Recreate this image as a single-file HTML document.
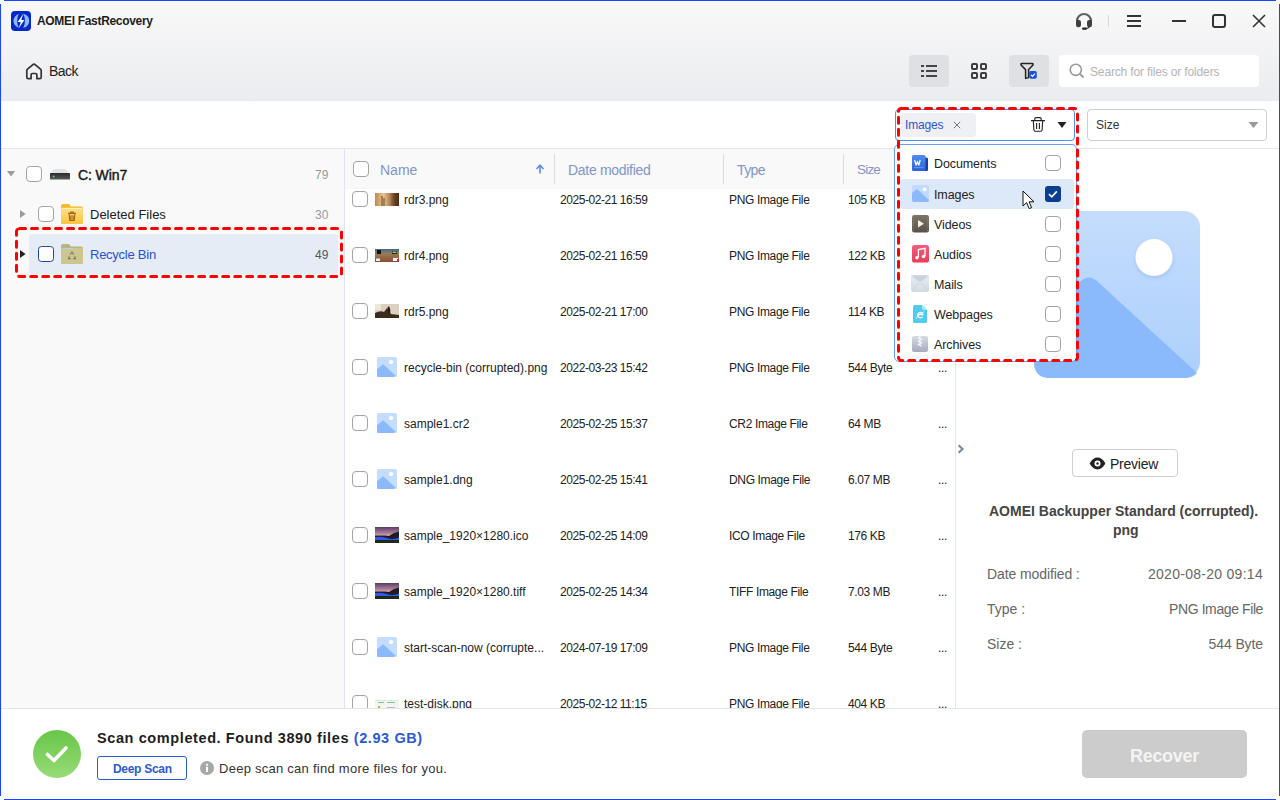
<!DOCTYPE html>
<html><head><meta charset="utf-8">
<style>
*{box-sizing:border-box;margin:0;padding:0}
html,body{width:1280px;height:800px;overflow:hidden;background:#fff}
body{position:relative;font-family:"Liberation Sans",sans-serif;color:#333}
.a{position:absolute}
.t{position:absolute;white-space:nowrap;line-height:1}
.bl{position:absolute;background:#1a44ff}
.cb{position:absolute;width:16px;height:16px;border:1px solid #a4a4a4;border-radius:4px;background:#fff}
</style></head><body>
<!-- header -->
<div class="a" style="left:0;top:0;width:1280px;height:101px;background:linear-gradient(#f9f9f9,#ebecef)"></div>
<!-- filter row -->
<div class="a" style="left:0;top:101px;width:1280px;height:47px;background:#fff"></div>
<div class="a" style="left:0;top:148px;width:1280px;height:1px;background:#e3e6f0"></div>
<!-- left panel -->
<div class="a" style="left:0;top:149px;width:344px;height:559px;background:#f9f9f9"></div>
<div class="a" style="left:344px;top:149px;width:1px;height:559px;background:#e2e3f2"></div>
<!-- table header -->
<div class="a" style="left:345px;top:149px;width:610px;height:40px;background:#f9f9fa"></div>
<!-- preview divider -->
<div class="a" style="left:955px;top:149px;width:1px;height:559px;background:#e6e6e6"></div>
<!-- bottom -->
<div class="a" style="left:0;top:708px;width:1280px;height:1px;background:#e6e6e6"></div>

<!-- title bar -->
<svg class="a" style="left:11px;top:11px" width="20" height="20" viewBox="0 0 20 20">
<rect x="0" y="0" width="20" height="20" rx="4" fill="#0428c8"/>
<path d="M8.4 3A7 7 0 0 0 9 16.9A2.6 7 0 0 1 8.4 3Z" fill="#8cb8ff"/>
<path d="M11.6 2.8A7 7 0 0 1 11 16.8A2.6 7 0 0 0 11.6 2.8Z" fill="#8cb8ff"/>
<path d="M12.4 2.4L6.7 11H9.8L7.5 17.6L13.4 9H10.3Z" fill="#fff"/>
</svg>
<div class="t" style="left:37px;top:15px;font-size:12px;font-weight:700;color:#1e1e1e;letter-spacing:-0.32px">AOMEI FastRecovery</div>
<!-- headset -->
<svg class="a" style="left:1075px;top:12px" width="18" height="18" viewBox="0 0 18 18">
<defs><linearGradient id="hg" x1="0" y1="0" x2="0" y2="1"><stop offset="0" stop-color="#666"/><stop offset="1" stop-color="#333"/></linearGradient></defs>
<path d="M2 12V9A7 7 0 0 1 16 9V12" stroke="url(#hg)" stroke-width="2" fill="none"/>
<rect x="1" y="8" width="5" height="7.2" rx="2.2" fill="#3f3f3f"/>
<rect x="12" y="8" width="5" height="7.2" rx="2.2" fill="#3f3f3f"/>
<path d="M14.6 14.6Q13.6 16.5 10.5 16.6" stroke="#333" stroke-width="1.1" fill="none"/>
<rect x="7" y="15.4" width="5" height="2.4" rx="1.2" fill="#222"/>
</svg>
<div class="a" style="left:1108px;top:15px;width:1px;height:12px;background:#d8d8d8"></div>
<div class="a" style="left:1127px;top:15px;width:14px;height:2px;background:#333"></div>
<div class="a" style="left:1127px;top:20px;width:14px;height:2px;background:#333"></div>
<div class="a" style="left:1127px;top:25px;width:14px;height:2px;background:#333"></div>
<div class="a" style="left:1172px;top:20px;width:14px;height:2px;background:#333"></div>
<div class="a" style="left:1212px;top:14px;width:14px;height:14px;border:2px solid #333;border-radius:3px"></div>
<svg class="a" style="left:1252px;top:14px" width="14" height="14" viewBox="0 0 14 14">
<path d="M1 1L13 13M13 1L1 13" stroke="#333" stroke-width="1.6"/>
</svg>
<!-- back -->
<svg class="a" style="left:25px;top:62px" width="18" height="18" viewBox="0 0 18 18">
<path d="M1.8 8.6Q1.8 7.8 2.5 7.2L7.6 2.8Q9 1.6 10.4 2.8L15.5 7.2Q16.2 7.8 16.2 8.6V15.3Q16.2 16.7 14.8 16.7H11.9V12.8Q11.9 11.5 10.6 11.5H7.4Q6.1 11.5 6.1 12.8V16.7H3.2Q1.8 16.7 1.8 15.3Z" stroke="#333" stroke-width="1.7" fill="none" stroke-linejoin="round"/>
</svg>
<div class="t" style="left:49px;top:64px;font-size:14px;color:#222;letter-spacing:-0.5px">Back</div>
<!-- toolbar -->
<div class="a" style="left:909px;top:55px;width:40px;height:32px;border-radius:4px;background:#dfe0e3"></div>
<div class="a" style="left:921px;top:65px;width:3px;height:2px;background:#444"></div>
<div class="a" style="left:921px;top:70px;width:3px;height:2px;background:#444"></div>
<div class="a" style="left:921px;top:75px;width:3px;height:2px;background:#444"></div>
<div class="a" style="left:926px;top:65px;width:11px;height:2px;background:#444"></div>
<div class="a" style="left:926px;top:70px;width:11px;height:2px;background:#444"></div>
<div class="a" style="left:926px;top:75px;width:11px;height:2px;background:#444"></div>
<div class="a" style="left:971px;top:63px;width:7px;height:7px;border:2px solid #3d3d3d;border-radius:2px"></div>
<div class="a" style="left:980px;top:63px;width:7px;height:7px;border:2px solid #3d3d3d;border-radius:2px"></div>
<div class="a" style="left:971px;top:72px;width:7px;height:7px;border:2px solid #3d3d3d;border-radius:2px"></div>
<div class="a" style="left:980px;top:72px;width:7px;height:7px;border:2px solid #3d3d3d;border-radius:2px"></div>
<div class="a" style="left:1009px;top:55px;width:40px;height:32px;border-radius:4px;background:#dfe0e3"></div>
<svg class="a" style="left:1020px;top:62px" width="20" height="18" viewBox="0 0 20 18">
<path d="M1.6 1.4H12.4Q13 1.4 13 2V3L8.6 7.6V15.6L5.6 16.4V7.6L1 3V2Q1 1.4 1.6 1.4Z" stroke="#222" stroke-width="1.5" fill="none" stroke-linejoin="round"/>
<rect x="9.2" y="9" width="7.6" height="7.8" rx="1.8" fill="#1a50d4"/>
<path d="M10.9 12.9L12.5 14.3L15 11.6" stroke="#fff" stroke-width="1.2" fill="none"/>
</svg>
<div class="a" style="left:1059px;top:55px;width:200px;height:32px;border-radius:4px;background:#fff"></div>
<svg class="a" style="left:1069px;top:63px" width="16" height="16" viewBox="0 0 16 16">
<circle cx="6.8" cy="6.8" r="5.6" stroke="#999" stroke-width="1.6" fill="none"/>
<path d="M10.8 10.8L14.5 14.5" stroke="#999" stroke-width="1.8"/>
</svg>
<div class="t" style="left:1090px;top:66px;font-size:12px;color:#b4b4b4;letter-spacing:-0.15px">Search for files or folders</div>

<!-- filter row -->
<div class="a" style="left:895px;top:109px;width:180px;height:32px;border:1px solid #4d8ff0;border-radius:4px;background:#fff"></div>
<div class="a" style="left:901px;top:113px;width:75px;height:24px;border-radius:4px;background:#eff0f3"></div>
<div class="t" style="left:905px;top:119px;font-size:12px;color:#2f55cc;letter-spacing:-0.18px">Images</div>
<svg class="a" style="left:952px;top:120px" width="10" height="10" viewBox="0 0 10 10"><path d="M1.8 1.8L8.2 8.2M8.2 1.8L1.8 8.2" stroke="#777" stroke-width="1"/></svg>
<svg class="a" style="left:1030px;top:116px" width="16" height="16" viewBox="0 0 16 16">
<path d="M1 4.6H15M4.8 4.4V2.8Q4.8 1.6 6 1.6H10Q11.2 1.6 11.2 2.8V4.4M3.3 4.8L3.9 14Q4 15.3 5.3 15.3H10.7Q12 15.3 12.1 14L12.7 4.8M6.6 7V13M9.4 7V13" stroke="#222" stroke-width="1.1" fill="none"/>
</svg>
<svg class="a" style="left:1057px;top:121px" width="10" height="8" viewBox="0 0 10 8"><path d="M0.5 1H9.5L5 7Z" fill="#222"/></svg>
<div class="a" style="left:1087px;top:109px;width:180px;height:32px;border:1px solid #cfcfcf;border-radius:4px;background:#fff"></div>
<div class="t" style="left:1096px;top:119px;font-size:12px;color:#333">Size</div>
<svg class="a" style="left:1248px;top:121px" width="11" height="8" viewBox="0 0 11 8"><path d="M0.5 1H10.5L5.5 7Z" fill="#999"/></svg>

<!-- table -->
<div class="cb" style="left:353px;top:161px"></div>
<div class="t" style="left:380px;top:163px;font-size:14px;color:#8195c7">Name</div>
<svg class="a" style="left:535px;top:164px" width="10" height="10" viewBox="0 0 10 10"><path d="M5 9.5V1.5M1.5 5L5 1.2L8.5 5" stroke="#5b8fe2" stroke-width="1.6" fill="none"/></svg>
<div class="a" style="left:554px;top:154px;width:1px;height:30px;background:#dcdcdc"></div>
<div class="t" style="left:568px;top:163px;font-size:14px;color:#8195c7;letter-spacing:-0.3px">Date modified</div>
<div class="a" style="left:723px;top:154px;width:1px;height:30px;background:#dcdcdc"></div>
<div class="t" style="left:737px;top:163px;font-size:14px;color:#8195c7;letter-spacing:-0.6px">Type</div>
<div class="a" style="left:843px;top:154px;width:1px;height:30px;background:#dcdcdc"></div>
<div class="t" style="left:857px;top:163px;font-size:13.5px;color:#8195c7;letter-spacing:-0.8px">Size</div>
<div class="a" style="left:345px;top:189px;width:610px;height:519px;overflow:hidden">
<div style="position:absolute;left:-345px;top:-189px;width:1280px;height:800px;font-size:12px;color:#222">
<div class="cb" style="left:352px;top:191px"></div>
<svg class="a" style="left:375px;top:193px" width="24" height="13" viewBox="0 0 24 13"><defs><linearGradient id="r3" x1="0" y1="0" x2="1" y2="0"><stop offset="0" stop-color="#c08a50"/><stop offset="0.35" stop-color="#e6c690"/><stop offset="0.6" stop-color="#b88858"/><stop offset="0.8" stop-color="#6a4424"/><stop offset="1" stop-color="#4a2c16"/></linearGradient></defs><rect width="24" height="13" fill="url(#r3)"/><path d="M7 3V13M9 5V13" stroke="#7a5230" stroke-width="1.2"/></svg>
<div class="t" style="left:404px;top:194px">rdr3.png</div>
<div class="t" style="left:560px;top:194px;letter-spacing:-0.45px">2025-02-21 16:59</div>
<div class="t" style="left:729px;top:194px;letter-spacing:-0.35px">PNG Image File</div>
<div class="t" style="left:848px;top:194px;letter-spacing:-0.38px">105 KB</div>
<div class="t" style="left:938px;top:194px;letter-spacing:-0.3px">...</div>
<div class="cb" style="left:352px;top:247px"></div>
<svg class="a" style="left:375px;top:249px" width="24" height="13" viewBox="0 0 24 13"><defs><linearGradient id="r4" x1="0" y1="0" x2="0" y2="1"><stop offset="0" stop-color="#3b6a96"/><stop offset="0.35" stop-color="#9a7a5a"/><stop offset="1" stop-color="#8a5030"/></linearGradient></defs><rect width="24" height="13" fill="url(#r4)"/><rect x="2" y="1" width="4" height="4" fill="#111"/><rect x="17" y="2" width="5" height="3" fill="#222"/><rect x="17.5" y="2.5" width="4" height="1.5" fill="#9c3"/><rect x="1" y="9.5" width="4" height="2.5" fill="#eee"/><rect x="18" y="9" width="5" height="3" fill="#fff"/><rect x="22" y="10" width="2" height="2" fill="#d22"/></svg>
<div class="t" style="left:404px;top:250px">rdr4.png</div>
<div class="t" style="left:560px;top:250px;letter-spacing:-0.45px">2025-02-21 16:59</div>
<div class="t" style="left:729px;top:250px;letter-spacing:-0.35px">PNG Image File</div>
<div class="t" style="left:848px;top:250px;letter-spacing:-0.38px">122 KB</div>
<div class="t" style="left:938px;top:250px;letter-spacing:-0.3px">...</div>
<div class="cb" style="left:352px;top:303px"></div>
<svg class="a" style="left:375px;top:304px" width="24" height="14" viewBox="0 0 24 14"><rect width="24" height="14" fill="#ddd0be"/><path d="M0 9Q6 6 9 8L12 4Q14 6 16 10L24 11V14H0Z" fill="#3c2c1e"/><path d="M13 3Q15 5 14 9" stroke="#2a1e14" stroke-width="2"/><rect x="0" y="0" width="6" height="6" fill="#efe6da"/></svg>
<div class="t" style="left:404px;top:306px">rdr5.png</div>
<div class="t" style="left:560px;top:306px;letter-spacing:-0.45px">2025-02-21 17:00</div>
<div class="t" style="left:729px;top:306px;letter-spacing:-0.35px">PNG Image File</div>
<div class="t" style="left:848px;top:306px;letter-spacing:-0.38px">114 KB</div>
<div class="t" style="left:938px;top:306px;letter-spacing:-0.3px">...</div>
<div class="cb" style="left:352px;top:359px"></div>
<svg class="a" style="left:377px;top:357px" width="20" height="20" viewBox="0 0 20 20"><rect width="20" height="20" rx="1.5" fill="#c4dcfd"/><path d="M0 12.5L5.3 7.8Q6 7.2 6.7 7.8L18.5 18.6Q17.8 20 16.5 20H1.5Q0 20 0 18.5Z" fill="#8bb9fb"/><circle cx="14" cy="5.2" r="2.1" fill="#fff"/></svg>
<div class="t" style="left:404px;top:362px">recycle-bin (corrupted).png</div>
<div class="t" style="left:560px;top:362px;letter-spacing:-0.45px">2022-03-23 15:42</div>
<div class="t" style="left:729px;top:362px;letter-spacing:-0.35px">PNG Image File</div>
<div class="t" style="left:848px;top:362px;letter-spacing:-0.38px">544 Byte</div>
<div class="t" style="left:938px;top:362px;letter-spacing:-0.3px">...</div>
<div class="cb" style="left:352px;top:415px"></div>
<svg class="a" style="left:377px;top:413px" width="20" height="20" viewBox="0 0 20 20"><rect width="20" height="20" rx="1.5" fill="#c4dcfd"/><path d="M0 12.5L5.3 7.8Q6 7.2 6.7 7.8L18.5 18.6Q17.8 20 16.5 20H1.5Q0 20 0 18.5Z" fill="#8bb9fb"/><circle cx="14" cy="5.2" r="2.1" fill="#fff"/></svg>
<div class="t" style="left:404px;top:418px">sample1.cr2</div>
<div class="t" style="left:560px;top:418px;letter-spacing:-0.45px">2025-02-25 15:37</div>
<div class="t" style="left:729px;top:418px;letter-spacing:-0.35px">CR2 Image File</div>
<div class="t" style="left:848px;top:418px;letter-spacing:-0.38px">64 MB</div>
<div class="t" style="left:938px;top:418px;letter-spacing:-0.3px">...</div>
<div class="cb" style="left:352px;top:471px"></div>
<svg class="a" style="left:377px;top:469px" width="20" height="20" viewBox="0 0 20 20"><rect width="20" height="20" rx="1.5" fill="#c4dcfd"/><path d="M0 12.5L5.3 7.8Q6 7.2 6.7 7.8L18.5 18.6Q17.8 20 16.5 20H1.5Q0 20 0 18.5Z" fill="#8bb9fb"/><circle cx="14" cy="5.2" r="2.1" fill="#fff"/></svg>
<div class="t" style="left:404px;top:474px">sample1.dng</div>
<div class="t" style="left:560px;top:474px;letter-spacing:-0.45px">2025-02-25 15:41</div>
<div class="t" style="left:729px;top:474px;letter-spacing:-0.35px">DNG Image File</div>
<div class="t" style="left:848px;top:474px;letter-spacing:-0.38px">6.07 MB</div>
<div class="t" style="left:938px;top:474px;letter-spacing:-0.3px">...</div>
<div class="cb" style="left:352px;top:527px"></div>
<svg class="a" style="left:375px;top:527px" width="24" height="16" viewBox="0 0 24 16"><defs><linearGradient id="nt" x1="0" y1="0" x2="0" y2="1"><stop offset="0" stop-color="#5a3c60"/><stop offset="0.45" stop-color="#b88aa8"/><stop offset="0.55" stop-color="#e8b890"/></linearGradient></defs><rect width="24" height="16" fill="url(#nt)"/><path d="M0 8.5H10L14 9L19 6L24 4.5V16H0Z" fill="#1c1c22"/><path d="M0 10Q6 9 12 11T24 10.5V13.5Q16 12.5 10 14T0 13Z" fill="#2d5af0"/><rect x="0" y="13" width="24" height="3" fill="#202a18"/></svg>
<div class="t" style="left:404px;top:530px">sample_1920×1280.ico</div>
<div class="t" style="left:560px;top:530px;letter-spacing:-0.45px">2025-02-25 14:09</div>
<div class="t" style="left:729px;top:530px;letter-spacing:-0.35px">ICO Image File</div>
<div class="t" style="left:848px;top:530px;letter-spacing:-0.38px">176 KB</div>
<div class="t" style="left:938px;top:530px;letter-spacing:-0.3px">...</div>
<div class="cb" style="left:352px;top:583px"></div>
<svg class="a" style="left:375px;top:583px" width="24" height="16" viewBox="0 0 24 16"><defs><linearGradient id="nt" x1="0" y1="0" x2="0" y2="1"><stop offset="0" stop-color="#5a3c60"/><stop offset="0.45" stop-color="#b88aa8"/><stop offset="0.55" stop-color="#e8b890"/></linearGradient></defs><rect width="24" height="16" fill="url(#nt)"/><path d="M0 8.5H10L14 9L19 6L24 4.5V16H0Z" fill="#1c1c22"/><path d="M0 10Q6 9 12 11T24 10.5V13.5Q16 12.5 10 14T0 13Z" fill="#2d5af0"/><rect x="0" y="13" width="24" height="3" fill="#202a18"/></svg>
<div class="t" style="left:404px;top:586px">sample_1920×1280.tiff</div>
<div class="t" style="left:560px;top:586px;letter-spacing:-0.45px">2025-02-25 14:34</div>
<div class="t" style="left:729px;top:586px;letter-spacing:-0.35px">TIFF Image File</div>
<div class="t" style="left:848px;top:586px;letter-spacing:-0.38px">7.03 MB</div>
<div class="t" style="left:938px;top:586px;letter-spacing:-0.3px">...</div>
<div class="cb" style="left:352px;top:639px"></div>
<svg class="a" style="left:377px;top:637px" width="20" height="20" viewBox="0 0 20 20"><rect width="20" height="20" rx="1.5" fill="#c4dcfd"/><path d="M0 12.5L5.3 7.8Q6 7.2 6.7 7.8L18.5 18.6Q17.8 20 16.5 20H1.5Q0 20 0 18.5Z" fill="#8bb9fb"/><circle cx="14" cy="5.2" r="2.1" fill="#fff"/></svg>
<div class="t" style="left:404px;top:642px">start-scan-now (corrupte...</div>
<div class="t" style="left:560px;top:642px;letter-spacing:-0.45px">2024-07-19 17:09</div>
<div class="t" style="left:729px;top:642px;letter-spacing:-0.35px">PNG Image File</div>
<div class="t" style="left:848px;top:642px;letter-spacing:-0.38px">544 Byte</div>
<div class="t" style="left:938px;top:642px;letter-spacing:-0.3px">...</div>
<div class="cb" style="left:352px;top:695px"></div>
<svg class="a" style="left:375px;top:700px" width="24" height="14" viewBox="0 0 24 14"><rect width="24" height="14" fill="#f3f5f3"/><rect x="0" y="0" width="24" height="1" fill="#dde6ee"/><rect x="3" y="2" width="6" height="1" fill="#7ec87e"/><rect x="12" y="2" width="8" height="1" fill="#7ec87e"/><rect x="3" y="6" width="2" height="2" fill="#c9a84a"/><rect x="12" y="7" width="8" height="1" fill="#bbb"/></svg>
<div class="t" style="left:404px;top:698px">test-disk.png</div>
<div class="t" style="left:560px;top:698px;letter-spacing:-0.45px">2025-02-12 11:15</div>
<div class="t" style="left:729px;top:698px;letter-spacing:-0.35px">PNG Image File</div>
<div class="t" style="left:848px;top:698px;letter-spacing:-0.38px">404 KB</div>
<div class="t" style="left:938px;top:698px;letter-spacing:-0.3px">...</div>
</div></div>

<!-- preview panel -->
<svg class="a" style="left:1034px;top:211px" width="166" height="167" viewBox="0 0 166 167">
<defs><linearGradient id="pg1" x1="0" y1="0" x2="0" y2="1"><stop offset="0" stop-color="#c5ddfd"/><stop offset="1" stop-color="#acd0fc"/></linearGradient>
<filter id="sh" x="-30%" y="-30%" width="160%" height="160%"><feDropShadow dx="0" dy="2" stdDeviation="2" flood-color="#6f9de0" flood-opacity="0.35"/></filter></defs>
<rect width="166" height="167" rx="16" fill="url(#pg1)"/>
<path d="M0 118L46 71Q55 62 64 71L163 162Q159 167 150 167H16Q0 167 0 151Z" fill="#8ab9fc"/>
<circle cx="120" cy="46.5" r="18.5" fill="#fff" filter="url(#sh)"/>
</svg>
<svg class="a" style="left:957px;top:444px" width="8" height="10" viewBox="0 0 8 10"><path d="M1.6 1.2L5.6 5L1.6 8.8" stroke="#7888a0" stroke-width="2" fill="none"/></svg>
<div class="a" style="left:1072px;top:449px;width:106px;height:28px;border:1px solid #cfcfcf;border-radius:4px;background:#fff"></div>
<svg class="a" style="left:1089px;top:457px" width="17" height="13" viewBox="0 0 17 13">
<path d="M0.6 6.5Q4 0.6 8.5 0.6Q13 0.6 16.4 6.5Q13 12.4 8.5 12.4Q4 12.4 0.6 6.5Z" fill="#222"/>
<circle cx="8.5" cy="6.5" r="3" fill="#fff"/><circle cx="8.5" cy="6.5" r="1.2" fill="#222"/>
</svg>
<div class="t" style="left:1110px;top:457px;font-size:14px;color:#222;letter-spacing:-0.23px">Preview</div>
<div class="t" style="left:989px;top:504px;font-size:14px;font-weight:700;color:#444;letter-spacing:0px">AOMEI Backupper Standard (corrupted).</div>
<div class="t" style="left:1113px;top:523px;font-size:14px;font-weight:700;color:#444">png</div>
<div class="t" style="left:987px;top:567px;font-size:14px;color:#666;letter-spacing:-0.1px">Date modified :</div>
<div class="t" style="left:987px;top:602px;font-size:14px;color:#666">Type :</div>
<div class="t" style="left:987px;top:637px;font-size:14px;color:#666">Size :</div>
<div class="t" style="right:17px;top:567px;font-size:14px;color:#666;letter-spacing:0.28px">2020-08-20 09:14</div>
<div class="t" style="right:17px;top:602px;font-size:14px;color:#666;letter-spacing:-0.4px">PNG Image File</div>
<div class="t" style="right:17px;top:637px;font-size:14px;color:#666;letter-spacing:-0.1px">544 Byte</div>

<!-- bottom bar -->
<svg class="a" style="left:33px;top:730px" width="48" height="48" viewBox="0 0 48 48">
<defs><linearGradient id="gg" x1="0" y1="0" x2="0" y2="1"><stop offset="0" stop-color="#68c648"/><stop offset="1" stop-color="#97dc76"/></linearGradient></defs>
<circle cx="24" cy="24" r="24" fill="url(#gg)"/>
<path d="M14.5 24.5L21 30.5L33 18" stroke="#fff" stroke-width="3.6" fill="none" stroke-linecap="round" stroke-linejoin="round"/>
</svg>
<div class="t" style="left:97px;top:731px;font-size:14.5px;font-weight:700;color:#1e1e1e;letter-spacing:0.6px">Scan completed. Found 3890 files <span style="color:#2a5bd0">(2.93 GB)</span></div>
<div class="a" style="left:97px;top:756px;width:90px;height:24px;border:1px solid #2a5bd7;border-radius:3px;background:#fff"></div>
<div class="t" style="left:113px;top:763px;font-size:12px;font-weight:700;color:#2a5bd0;letter-spacing:-0.3px">Deep Scan</div>
<svg class="a" style="left:200px;top:761px" width="14" height="14" viewBox="0 0 14 14">
<circle cx="7" cy="7" r="7" fill="#a8a8a8"/><circle cx="7" cy="3.8" r="1.1" fill="#fff"/><rect x="6" y="5.8" width="2" height="5.2" fill="#fff"/>
</svg>
<div class="t" style="left:219px;top:762px;font-size:13px;color:#333;letter-spacing:0.26px">Deep scan can find more files for you.</div>
<div class="a" style="left:1082px;top:730px;width:165px;height:48px;border-radius:5px;background:#cccccc"></div>
<div class="t" style="left:1130px;top:747px;font-size:18px;font-weight:700;color:#f4f4f4;letter-spacing:-0.3px">Recover</div>

<!-- left tree -->
<svg class="a" style="left:7px;top:171px" width="8" height="6" viewBox="0 0 8 6"><path d="M0 0H8L4 5.5Z" fill="#9a9a9a"/></svg>
<div class="cb" style="left:26px;top:166px"></div>
<svg class="a" style="left:49px;top:168px" width="22" height="13" viewBox="0 0 22 13">
<defs><linearGradient id="drg" x1="0" y1="0" x2="0" y2="1"><stop offset="0" stop-color="#2a2a2a"/><stop offset="1" stop-color="#5a5a5a"/></linearGradient></defs>
<path d="M4.6 1H16.6L19.6 5.2H1.6Z" fill="#e0e2e6"/>
<rect x="1" y="5" width="20" height="6.6" rx="0.6" fill="url(#drg)"/>
<circle cx="4.6" cy="8.4" r="1" fill="#3ae04a"/>
</svg>
<div class="t" style="left:78px;top:168px;font-size:14px;font-weight:400;color:#1a1a1a;-webkit-text-stroke:0.45px #1a1a1a;letter-spacing:-0.1px">C: Win7</div>
<div class="t" style="left:315px;top:169px;font-size:12px;color:#9a9a9a">79</div>
<svg class="a" style="left:20px;top:210px" width="6" height="8" viewBox="0 0 6 8"><path d="M0 0V8L5.6 4Z" fill="#9a9a9a"/></svg>
<div class="cb" style="left:38px;top:206px"></div>
<svg class="a" style="left:61px;top:204px" width="22" height="20" viewBox="0 0 22 20">
<defs><linearGradient id="fg" x1="0" y1="0" x2="0" y2="1"><stop offset="0" stop-color="#ffe08a"/><stop offset="1" stop-color="#f8c53c"/></linearGradient></defs>
<path d="M0 2Q0 0 2 0H8L10 2.5H20Q22 2.5 22 4.5V18Q22 20 20 20H2Q0 20 0 18Z" fill="#f5b82a"/>
<rect x="0" y="4" width="22" height="16" rx="1.6" fill="url(#fg)"/>
<path d="M0.5 4.3H21.5" stroke="#fff6d8" stroke-width="0.8"/>
<path d="M7 9.3H15M9.6 9.1V8H12.4V9.1M8.2 10.2L8.8 16.4H13.2L13.8 10.2M10 11.3V15.2M12 11.3V15.2" stroke="#a8641a" stroke-width="1.2" fill="none"/>
</svg>
<div class="t" style="left:90px;top:208px;font-size:13px;color:#222">Deleted Files</div>
<div class="t" style="left:315px;top:209px;font-size:12px;color:#9a9a9a">30</div>
<div class="a" style="left:29px;top:234px;width:309px;height:40px;border-radius:4px;background:#e6ecf6"></div>
<svg class="a" style="left:20px;top:250px" width="6" height="8" viewBox="0 0 6 8"><path d="M0 0V8L5.6 4Z" fill="#222"/></svg>
<div class="a" style="left:38px;top:246px;width:16px;height:16px;border:1.5px solid #1d4a9a;border-radius:3.5px;background:#fff"></div>
<svg class="a" style="left:61px;top:244px" width="22" height="20" viewBox="0 0 22 20">
<path d="M0 2Q0 0 2 0H8L10 2.5H20Q22 2.5 22 4.5V18Q22 20 20 20H2Q0 20 0 18Z" fill="#bdb27a"/>
<rect x="0" y="4" width="22" height="16" rx="1.6" fill="#cdc690"/>
<path d="M0.8 4.4H12" stroke="#a9d6f2" stroke-width="1"/>
<path d="M9.2 10.6L11 8L12.8 10.6M13.6 12.2L14.6 14.6H12M10 14.6H7.4L8.4 12.2" stroke="#8a7a60" stroke-width="1.1" fill="none"/>
</svg>
<div class="t" style="left:90px;top:248px;font-size:13px;color:#2552d4;letter-spacing:-0.25px">Recycle Bin</div>
<div class="t" style="left:315px;top:249px;font-size:12px;color:#555">49</div>

<!-- dropdown -->
<div class="a" style="left:894px;top:144px;width:183px;height:218px;border:1px solid #6a9cf0;border-radius:5px;background:#fff"></div>
<div class="a" style="left:900px;top:179px;width:174px;height:30px;border-radius:4px;background:#dde8f8"></div>
<svg class="a" style="left:911px;top:154px" width="18" height="18" viewBox="0 0 18 18">
<defs><linearGradient id="dg" x1="0" y1="0" x2="0" y2="1"><stop offset="0" stop-color="#4f8ef0"/><stop offset="1" stop-color="#2a62dc"/></linearGradient></defs>
<path d="M12 3.5H15.5Q17 3.5 17 5V15.5Q17 17 15.5 17H12Z" fill="#1b3f9e"/>
<rect x="1" y="1" width="13.5" height="16" rx="1.6" fill="url(#dg)"/>
<path d="M3.6 6L5 11.2L6.4 7.4L7.8 11.2L9.2 6" stroke="#fff" stroke-width="1.2" fill="none" stroke-linejoin="round"/>
<path d="M3 13.6H12.5" stroke="#8fb6f7" stroke-width="0.6"/>
</svg>
<div class="t" style="left:934px;top:158px;font-size:12.5px;color:#222;letter-spacing:-0.1px">Documents</div>
<svg class="a" style="left:912px;top:185px" width="17" height="17" viewBox="0 0 17 17">
<rect x="0" y="0" width="17" height="17" rx="2" fill="#c2dbfd"/>
<path d="M0 9Q0 7.8 1 7L4.2 4.6Q5 4 5.8 4.7L17 15V15Q17 17 15 17H2Q0 17 0 15Z" fill="#8bb9fb"/>
<circle cx="12.6" cy="4.4" r="1.9" fill="#fff"/>
</svg>
<div class="t" style="left:934px;top:189px;font-size:12.5px;color:#222;letter-spacing:-0.1px">Images</div>
<svg class="a" style="left:912px;top:215px" width="17" height="18" viewBox="0 0 17 18">
<defs><linearGradient id="vg" x1="0" y1="0" x2="0" y2="1"><stop offset="0" stop-color="#7c7468"/><stop offset="1" stop-color="#5a5248"/></linearGradient></defs>
<rect x="0" y="0" width="17" height="17.5" rx="2.2" fill="url(#vg)"/>
<path d="M1.2 2V16M15.8 2V16" stroke="#8d8579" stroke-width="1.2" stroke-dasharray="1.2 1.4"/>
<path d="M6 5L12 8.8L6 12.6Z" fill="#f3f0ea"/>
</svg>
<div class="t" style="left:934px;top:219px;font-size:12.5px;color:#222;letter-spacing:-0.1px">Videos</div>
<svg class="a" style="left:912px;top:245px" width="17" height="18" viewBox="0 0 17 18">
<defs><linearGradient id="ag" x1="0" y1="0" x2="0" y2="1"><stop offset="0" stop-color="#f35d7e"/><stop offset="1" stop-color="#e83d5c"/></linearGradient></defs>
<rect x="0" y="0" width="17" height="17.5" rx="2.6" fill="url(#ag)"/>
<path d="M6.4 12.6V4.6L13 3.4V11.4" stroke="#fff" stroke-width="1.3" fill="none"/>
<circle cx="4.9" cy="12.7" r="1.7" fill="#fff"/><circle cx="11.5" cy="11.5" r="1.7" fill="#fff"/>
</svg>
<div class="t" style="left:934px;top:249px;font-size:12.5px;color:#222;letter-spacing:-0.1px">Audios</div>
<svg class="a" style="left:911px;top:275px" width="18" height="17" viewBox="0 0 18 17">
<defs><linearGradient id="mg" x1="0" y1="0" x2="0" y2="1"><stop offset="0" stop-color="#e6ebef"/><stop offset="1" stop-color="#d3dbe2"/></linearGradient></defs>
<rect x="0" y="0" width="18" height="17" rx="2" fill="url(#mg)"/>
<path d="M1 16L7 8.8M17 16L11 8.8" stroke="#c4ced6" stroke-width="0.8"/>
<path d="M0.3 1.6Q0.6 0.2 2 0.2H16Q17.4 0.2 17.7 1.6L10.4 8.6Q9 9.8 7.6 8.6Z" fill="#c9d3dc"/>
<path d="M1.2 1.4L8 7.6Q9 8.4 10 7.6L16.8 1.4" stroke="#f2f5f7" stroke-width="0.9" fill="none"/>
</svg>
<div class="t" style="left:934px;top:279px;font-size:12.5px;color:#222;letter-spacing:-0.1px">Mails</div>
<svg class="a" style="left:913px;top:305px" width="14" height="18" viewBox="0 0 14 18">
<path d="M1.5 0H9L14 5V16.5Q14 18 12.5 18H1.5Q0 18 0 16.5V1.5Q0 0 1.5 0Z" fill="#4fcbef"/>
<path d="M9 0L14 5H10.5Q9 5 9 3.5Z" fill="#a6e4f7"/>
<path d="M9.6 11.6A2.7 2.7 0 1 1 10 9.6H5" stroke="#fff" stroke-width="1.2" fill="none"/>
<path d="M3.2 13.8Q5.5 8.2 11.2 6.8" stroke="#fff" stroke-width="0.8" fill="none"/>
</svg>
<div class="t" style="left:934px;top:309px;font-size:12.5px;color:#222;letter-spacing:-0.1px">Webpages</div>
<svg class="a" style="left:912px;top:336px" width="16" height="16" viewBox="0 0 16 16">
<defs><linearGradient id="zg" x1="0" y1="0" x2="0" y2="1"><stop offset="0" stop-color="#d8dbe4"/><stop offset="1" stop-color="#a4abbe"/></linearGradient></defs>
<rect x="0" y="0" width="16" height="16" rx="2" fill="url(#zg)"/>
<path d="M8.6 0.5L6.6 2L9.4 3.6L6.6 5.2L9.4 6.8L6.6 8.4L9.4 10" stroke="#f4f5f8" stroke-width="1.5" fill="none"/>
</svg>
<div class="t" style="left:934px;top:339px;font-size:12.5px;color:#222;letter-spacing:-0.1px">Archives</div>
<div class="cb" style="left:1045px;top:155px"></div>
<div class="a" style="left:1045px;top:186px;width:16px;height:16px;border-radius:3px;background:#0b3d91"></div>
<svg class="a" style="left:1045px;top:186px" width="16" height="16" viewBox="0 0 16 16"><path d="M4 8.2L6.8 10.8L11.8 5.4" stroke="#fff" stroke-width="1.6" fill="none"/></svg>
<div class="cb" style="left:1045px;top:216px"></div>
<div class="cb" style="left:1045px;top:246px"></div>
<div class="cb" style="left:1045px;top:276px"></div>
<div class="cb" style="left:1045px;top:306px"></div>
<div class="cb" style="left:1045px;top:336px"></div>
<!-- cursor -->
<svg class="a" style="left:1022px;top:190px" width="14" height="21" viewBox="0 0 14 21">
<path d="M1 1V16L4.6 12.6L7.2 18.6L9.6 17.6L7.1 11.8H12Z" fill="#fff" stroke="#111" stroke-width="1" stroke-linejoin="round"/>
</svg>
<!-- red dashed highlights -->
<svg class="a" style="left:0;top:0" width="1280" height="800" viewBox="0 0 1280 800">
<rect x="898.5" y="108.5" width="179" height="252" rx="3" fill="none" stroke="#ff0000" stroke-width="3" stroke-dasharray="6 6" stroke-linecap="round"/>
<rect x="16.5" y="228.5" width="325" height="48" rx="3" fill="none" stroke="#ff0000" stroke-width="3" stroke-dasharray="6 6" stroke-linecap="round"/>
</svg>

<!-- window border -->
<div class="bl" style="left:4px;top:0;width:1272px;height:1px"></div>
<div class="bl" style="left:4px;top:799px;width:1272px;height:1px"></div>
<div class="bl" style="left:0;top:4px;width:1px;height:792px"></div>
<div class="bl" style="left:1279px;top:4px;width:1px;height:792px"></div>
</body></html>
